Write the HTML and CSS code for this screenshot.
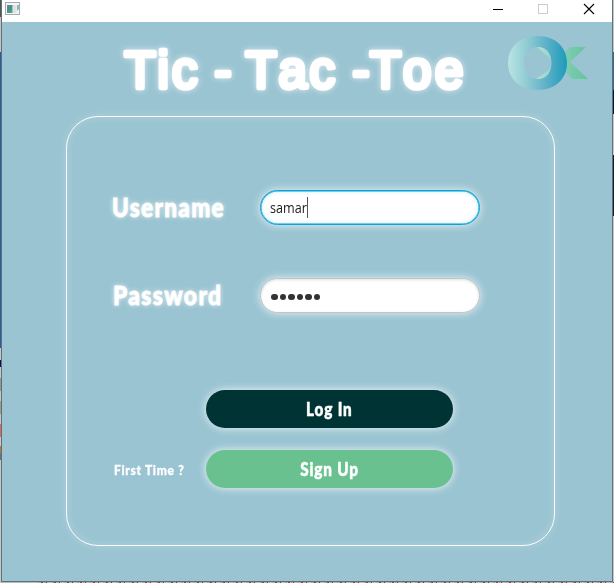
FILE: index.html
```html
<!DOCTYPE html>
<html lang="en">
<head>
<meta charset="utf-8">
<title>Tic - Tac -Toe</title>
<link rel="stylesheet" href="styles.css">
</head>
<body>
<div class="window">
  <div class="titlebar">
    <svg class="app-icon" width="16" height="14" viewBox="0 0 16 14">
      <defs><linearGradient id="pic" x1="0" y1="0" x2="0.6" y2="1"><stop offset="0" stop-color="#6389b5"/><stop offset="0.5" stop-color="#458f8c"/><stop offset="1" stop-color="#55a46c"/></linearGradient></defs>
      <rect x="0.5" y="0.5" width="14" height="12" fill="#f4f5f7" stroke="#a5a9b0"/>
      <rect x="2" y="3" width="5.5" height="8" fill="url(#pic)"/>
      <rect x="8" y="3" width="3.5" height="8" fill="#dfe1e5"/>
      <path d="M12 3h2v4l-2 2z" fill="#8ab8b7"/>
    </svg>
    <svg class="controls" width="102" height="12" viewBox="0 0 102 12">
      <path d="M0 6.500h10" stroke="#000"/>
      <rect x="45.500" y="1.500" width="9" height="9" fill="none" stroke="#ccc"/>
      <path d="M91 1l10 10M101 1L91 11" stroke="#000" stroke-width="1.100"/>
    </svg>
  </div>
  <main class="scene">
    <header class="header">
      <h1 class="title">
        <svg width="370" height="70" viewBox="110 35 370 70">
          <text y="88.300" x="124.500 157.500 172 200 214.500 232 245.500 278.500 309.500 338 352.500 370 403 435">Tic - Tac -Toe</text>
        </svg>
      </h1>
      <svg class="logo" width="82" height="56" viewBox="0 0 82 56">
        <defs>
          <linearGradient id="ring"><stop offset="0" stop-color="#b9e4e2"/><stop offset="0.3" stop-color="#93cdd4"/><stop offset="0.65" stop-color="#5db1c8"/><stop offset="1" stop-color="#1e9abb"/></linearGradient>
          <linearGradient id="cross" gradientUnits="userSpaceOnUse" x1="30" y1="0" x2="81" y2="0"><stop offset="0" stop-color="#b0dfd8"/><stop offset="0.500" stop-color="#82ceb6"/><stop offset="1" stop-color="#62c39c"/></linearGradient>
        </defs>
        <path d="M30 12h9l7 7v7zM46 32v7L38 44h-9zM63 12h16L63 27l18 17H65L54 32V22z" fill="url(#cross)"/>
        <path fill-rule="evenodd" d="M30.500 1C48 1 60 12 60 28S48 55 30.500 55 1 44 1 28 13 1 30.500 1zM31 12C22 12 17 19 17 28s5 16 14 16 13.500-7 13.500-16S40 12 31 12z" fill="url(#ring)"/>
      </svg>
    </header>
    <form class="panel">
      <div class="field">
        <label class="label user-label">Username</label>
        <div class="input focused"><span class="value">samar</span><i class="caret"></i></div>
      </div>
      <div class="field second">
        <label class="label pass-label">Password</label>
        <div class="input"><span class="dots"><i></i><i></i><i></i><i></i><i></i><i></i></span></div>
      </div>
      <div class="action login-row">
        <button type="button" class="btn login"><span>Log In</span></button>
      </div>
      <div class="action">
        <span class="hint">First Time ?</span>
        <button type="button" class="btn signup"><span>Sign Up</span></button>
      </div>
    </form>
  </main>
</div>
</body>
</html>
```
FILE: styles.css
```css
* { box-sizing: border-box; }

body {
  margin: 0;
  width: 614px;
  height: 583px;
  overflow: hidden;
  padding: 0 1px 1px;
  background:
    repeating-linear-gradient(90deg, #aaa 0 3px, #9a3c58 3px 5px, #b8b0b0 5px 8px, #6d3941 8px 9px, #c0b9b9 9px 13px) 38px 582px / 576px 1px no-repeat,
    linear-gradient(#555 0 17px, #c8c3bf 17px 52px, #275d9c 52px 348px, #c9c6c6 348px 360px, #101050 360px 367px, #c9c6c6 367px 378px, #879e84 378px 391px, #c9c6c6 391px 401px, #9d9b83 401px 414px, #c9c6c6 414px 424px, #dc6960 424px 437px, #c9c6c6 437px 446px, #ab8230 446px 453px, #68747b 453px 460px, #c9c6c6 460px) 0 0 / 1px 583px no-repeat,
    linear-gradient(#c8c8c8 0 52px, #356692 52px 90px, #071344 90px 114px, #c8c8c8 114px 155px, #111b35 155px 216px, #c8c8c8 216px) 613px 0 / 1px 583px no-repeat,
    #bbb;
}

.window {
  width: 612px;
  height: 582px;
  border: 1px solid #607078;
  border-top: 0;
  background: #9ac4d2;
}

.titlebar {
  height: 22px;
  background: #fff;
  display: flex;
  justify-content: space-between;
  padding: 2px 17px 0 3px;
}

.controls { margin-top: 1px; }

.header {
  height: 94px;
  display: flex;
  justify-content: space-between;
  padding: 13px 23px 0 108px;
}

.title {
  margin: 0;
  font: 51px "Liberation Sans", Arial, sans-serif;
}

.title svg {
  display: block;
  overflow: visible;
}

.title text {
  fill: #fff;
  stroke: #fff;
  stroke-width: 4.600px;
  stroke-linejoin: round;
  filter: drop-shadow(0 0 3px rgba(255, 255, 255, .65));
}

.panel {
  width: 489px;
  height: 430px;
  margin-left: 64px;
  padding-top: 73px;
  border: 1px solid #fff;
  border-radius: 32px;
  box-shadow: 0 0 10px rgba(255, 255, 255, .2), inset 0 0 10px rgba(255, 255, 255, .2);
}

.field {
  display: flex;
  height: 35px;
  padding-left: 44px;
}

.second { margin-top: 53px; }

.label {
  width: 149px;
  font: 900 27px/33px Lato, sans-serif;
  color: #fff;
  white-space: nowrap;
  -webkit-text-stroke: .8px #fff;
  letter-spacing: 1.6px;
  transform-origin: left center;
  text-shadow: 0 0 6px rgba(255, 255, 255, .9);
}

.user-label { transform: translateX(1px) scaleX(.835); }
.pass-label { transform: translateX(2px) scaleX(.845); }

.input {
  width: 220px;
  height: 35px;
  border: 1px solid #c2c4c5;
  border-radius: 18px;
  background: #fff;
  display: flex;
  align-items: center;
  padding-left: 9px;
  box-shadow: 0 0 8px rgba(255, 255, 255, .8), inset 0 1px 3px rgba(0, 0, 0, .12);
}

.focused {
  border-color: #0aa3d7;
  box-shadow: 0 0 8px rgba(255, 255, 255, .8), inset 0 0 0 .5px #0aa3d7, inset 0 0 4px rgba(80, 180, 220, .4);
}

.value {
  width: 37px;
  font: 14.500px/20px "Open Sans", sans-serif;
  color: #222;
  transform: scaleX(.87);
  transform-origin: left center;
}

.caret { width: 1px; height: 21px; background: #555; }

.dots { display: flex; gap: 2px; margin: 3px 0 0 1px; }
.dots i { width: 6.500px; height: 6.500px; border-radius: 50%; background: #333; }

.action {
  display: flex;
  justify-content: space-between;
  padding: 0 101px 0 47px;
  height: 38px;
  margin-top: 22px;
}

.login-row { justify-content: flex-end; margin-top: 77px; }

.btn {
  width: 247px;
  height: 38px;
  padding: 0;
  border: 0;
  border-radius: 19px;
  color: #fff;
  font: 900 18px/38px Lato, sans-serif;
  letter-spacing: 1px;
  -webkit-text-stroke: .5px #fff;
  box-shadow: 0 0 8px rgba(255, 255, 255, .85);
}

.btn span { display: inline-block; transform: scaleX(.85); }
.login { background: #003333; }
.signup { background: #6ac190; }

.hint {
  width: 70px;
  color: #fff;
  white-space: nowrap;
  font: 900 14px/39px Lato, sans-serif;
  letter-spacing: .8px;
  -webkit-text-stroke: .3px #fff;
  transform: scaleX(.86);
  transform-origin: left center;
}
```
